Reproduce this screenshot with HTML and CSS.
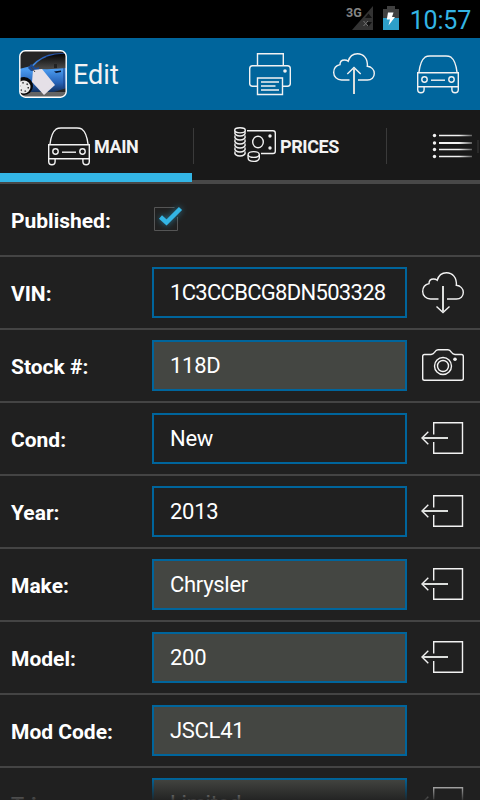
FILE: index.html
```html
<!DOCTYPE html>
<html lang="en">
  <head>
    <meta charset="UTF-8">
    <meta name="viewport" content="width=480">
    <title>Edit</title>
    <link rel="stylesheet" href="styles.css">
  </head>
  <body>
    <!-- Shared icons -->
    <svg class="defs" width="0" height="0">
      <symbol id="car" viewBox="0 0 44 40">
        <path d="M3 18C4 10 6.500 5 9 3.200Q11 2 14 2H30Q33 2 35 3.200C37.500 5 40 10 41 18" />
        <path d="M1.700 18.700H42.300V32.700H1.700Z" />
        <path d="M1.700 32V35.500a3.200 3.200 0 0 0 6.400 0V33M35.900 33V35.500a3.200 3.200 0 0 0 6.400 0V32" />
        <circle cx="8.500" cy="25.500" r="2.700" />
        <circle cx="35.500" cy="25.500" r="2.700" />
        <path d="M15 26.200H29" />
      </symbol>
      <symbol id="cloud" viewBox="0 0 44 44">
        <path d="M17.500 28H9.500C5 28 1.700 24.700 1.700 20.500C1.700 16 4.500 13.300 8 12.600C8 9.500 10 8 12.500 8C14 8 15.300 8.500 16.200 9.300C17.500 4.500 21 1.700 25.500 1.700C31.500 1.700 36 6.500 35.300 14.300C39.500 14.800 42.300 17.700 42.300 21.500C42.300 25.200 39.500 28 35.500 28H26" />
      </symbol>
      <symbol id="exit" viewBox="0 0 44 44">
        <path d="M12.700 17.500V5.700H41.500V36.300H12.700V25" />
        <path d="M7.300 14.800L1 21L7.300 27.200" />
        <path class="thick" d="M1.500 21H27" />
      </symbol>
    </svg>

    <div class="status-bar">
      <svg class="signal" width="30" height="26" viewBox="0 0 30 26">
        <path d="M27 0V24H6Z" fill="#333" />
        <path d="M19 12L22.500 7.500L26 12ZM19 16L22.500 20.500L26 16Z" fill="#111" />
        <path d="M17.500 15L22 20M22 15L17.500 20" stroke="#777" />
        <text x="0" y="11">3G</text>
      </svg>
      <svg class="battery" width="16" height="25" viewBox="0 0 16 25">
        <path d="M0 3H4V0H12V3H16V12H0Z" fill="#404040" />
        <path d="M0 12H16V24H0Z" fill="#2d9fc9" />
        <path d="M5 6.500H10.500L9 11H12L5.500 19.500L7 13.500H3.800Z" fill="#fff" />
      </svg>
      <span class="clock">10:57</span>
    </div>

    <header class="action-bar">
      <svg class="logo" width="48" height="48" viewBox="0 0 48 48">
        <defs>
          <linearGradient id="paint" gradientUnits="userSpaceOnUse" x1="0" y1="4" x2="0" y2="42">
            <stop offset="0" stop-color="#2455b0" />
            <stop offset=".4" stop-color="#4b9cf0" />
            <stop offset=".75" stop-color="#2763b8" />
            <stop offset="1" stop-color="#12305e" />
          </linearGradient>
          <linearGradient id="glass" gradientUnits="userSpaceOnUse" x1="0" y1="4" x2="0" y2="18">
            <stop offset="0" stop-color="#050505" />
            <stop offset="1" stop-color="#484848" />
          </linearGradient>
          <clipPath id="frame"><rect x="1" y="1" width="46" height="46" rx="5" /></clipPath>
        </defs>
        <g clip-path="url(#frame)">
          <rect width="48" height="48" fill="#252525" />
          <path d="M0 42H48V48H0Z" fill="#646464" />
          <path d="M0 19L12 16Q22 5 36 3.500L48 3V38L35 42H10L0 30Z" fill="url(#paint)" />
          <path d="M13.500 17Q22 7 36 4.500L48 3.500V18Q30 20 13.500 18.500Z" fill="url(#glass)" />
          <path d="M35 18V14H38V18Z" fill="#222" />
          <path d="M9 18L12 14L17 18L20 17V21H12Z" fill="#1b4a93" />
          <path d="M35 21.500L42 20.500V22L37 23Z" fill="#07152e" />
          <path d="M45 18V38" stroke="#173f85" />
          <circle cx="5" cy="36" r="9" fill="#080808" />
          <circle cx="5" cy="37" r="6.500" fill="#e8e8e8" />
          <circle cx="5" cy="37" r="4.300" fill="none" stroke="#333" stroke-width="1.500" stroke-dasharray="1.500 3" />
          <path d="M14 20L23 19L36 35L25 45L13 32Z" fill="#e5e0e7" />
          <path d="M12 17L16 22" stroke="#444" />
        </g>
        <rect x=".8" y=".8" width="46.400" height="46.400" rx="5.500" fill="none" stroke="#fff" stroke-width="1.400" />
      </svg>
      <h1>Edit</h1>
      <div class="actions">
        <svg class="icon" width="44" height="44" viewBox="0 0 44 44">
          <path d="M9.500 13.500V1.700H35.300V13.500" />
          <path d="M9 34.200H4.500Q1.700 34.200 1.700 31.500V16.700Q1.700 13.800 4.500 13.800H39.500Q42.300 13.800 42.300 16.700V31.500Q42.300 34.200 39.500 34.200H35" />
          <path d="M9.500 26H34.500V42.500H9.500Z" />
          <path d="M13 30H31M13 34H27.500M13 38H31" />
          <circle class="dot" cx="37" cy="19" r="1.800" />
        </svg>
        <svg class="icon" width="44" height="44" viewBox="0 0 44 44">
          <use href="#cloud" />
          <path d="M15.300 22L22 15.500L28.700 22" />
          <path class="thick" d="M22 16V42" />
        </svg>
        <svg class="icon" width="44" height="40"><use href="#car" /></svg>
      </div>
    </header>

    <nav class="tabs">
      <div class="tab active">
        <svg class="icon" width="44" height="40"><use href="#car" /></svg>
        <span>MAIN</span>
      </div>
      <div class="tab">
        <svg class="icon" width="45" height="40" viewBox="0 0 45 40">
          <path d="M15 4.700H41Q43.300 4.700 43.300 7V25.200Q43.300 27.500 41 27.500H29" />
          <ellipse cx="8" cy="4.300" rx="5.300" ry="2.600" />
          <path d="M3 5.500C1 11.500 15 11.500 13 5.500M3 9.500C1 15.500 15 15.500 13 9.500M3 13.500C1 19.500 15 19.500 13 13.500M3 17.500C1 23.500 15 23.500 13 17.500M3 21.500C1 27.500 15 27.500 13 21.500M3 25.500C1 31.500 15 31.500 13 25.500" />
          <ellipse cx="26" cy="16" rx="5.300" ry="5.800" />
          <circle class="dot" cx="38" cy="10" r="1.700" />
          <circle class="dot" cx="38" cy="22" r="1.700" />
          <ellipse cx="21.700" cy="28.500" rx="5.600" ry="2.900" />
          <path d="M16.100 29V32C16.100 36.500 27.300 36.500 27.300 32V29" />
        </svg>
        <span>PRICES</span>
      </div>
      <div class="tab more">
        <svg class="icon" width="48" height="40" viewBox="0 0 48 40">
          <defs>
            <linearGradient id="fade" gradientUnits="userSpaceOnUse" x1="6" y1="0" x2="41" y2="0">
              <stop offset=".6" stop-color="#f2f2f2" />
              <stop offset="1" stop-color="#555" />
            </linearGradient>
          </defs>
          <path stroke="url(#fade)" d="M7 9.500H40M7 23.500H40M7 30.500H40" />
          <path stroke="url(#fade)" stroke-width="2" d="M7 17H40" />
          <circle class="dot" cx="2.500" cy="9.500" r="1.700" />
          <circle class="dot" cx="2.500" cy="17" r="1.700" />
          <circle class="dot" cx="2.500" cy="23.500" r="1.700" />
          <circle class="dot" cx="2.500" cy="30.500" r="1.700" />
          <path d="M46 14V27" stroke="#333" />
        </svg>
      </div>
    </nav>

    <main class="form">
      <div class="row">
        <label>Published:</label>
        <svg class="checkbox" width="38" height="38" viewBox="0 0 38 38">
          <path d="M22.500 6.500H2.500V29.500H25.500V16" fill="none" stroke="#555" />
          <path class="glow" d="M8.500 16L14.500 21.500L28.500 7.500" />
          <path class="check" d="M8.500 16L14.500 21.500L28.500 7.500" />
        </svg>
      </div>
      <div class="row">
        <label>VIN:</label>
        <div class="field vin">1C3CCBCG8DN503328</div>
        <svg class="icon" width="44" height="44" viewBox="0 0 44 44">
          <use href="#cloud" />
          <path d="M15.500 35.500L22 41.500L28.500 35.500" />
          <path class="thick" d="M22 15V41" />
        </svg>
      </div>
      <div class="row">
        <label>Stock #:</label>
        <div class="field filled">118D</div>
        <svg class="icon" width="44" height="44" viewBox="0 1 44 44">
          <path d="M3.500 11.500H10Q12 11.300 13.500 9.300Q15.200 6.800 17 6.800H27Q28.800 6.800 30.500 9.300Q32 11.300 34 11.500H40.500Q42.300 11.500 42.300 13.300V35.500Q42.300 37.300 40.500 37.300H3.500Q1.700 37.300 1.700 35.500V13.300Q1.700 11.500 3.500 11.500Z" />
          <circle cx="22" cy="23" r="8.500" />
          <circle cx="22" cy="23" r="5.500" />
          <circle class="dot" cx="34" cy="16.200" r="1.800" />
        </svg>
      </div>
      <div class="row">
        <label>Cond:</label>
        <div class="field">New</div>
        <svg class="icon" width="44" height="44"><use href="#exit" /></svg>
      </div>
      <div class="row">
        <label>Year:</label>
        <div class="field">2013</div>
        <svg class="icon" width="44" height="44"><use href="#exit" /></svg>
      </div>
      <div class="row">
        <label>Make:</label>
        <div class="field filled">Chrysler</div>
        <svg class="icon" width="44" height="44"><use href="#exit" /></svg>
      </div>
      <div class="row">
        <label>Model:</label>
        <div class="field filled">200</div>
        <svg class="icon" width="44" height="44"><use href="#exit" /></svg>
      </div>
      <div class="row">
        <label>Mod Code:</label>
        <div class="field filled">JSCL41</div>
      </div>
      <div class="row">
        <label>Trim:</label>
        <div class="field filled">Limited</div>
        <svg class="icon" width="44" height="44"><use href="#exit" /></svg>
      </div>
    </main>
  </body>
</html>
```

FILE: styles.css
```css
* {
  box-sizing: border-box;
}
body {
  display: flex;
  flex-direction: column;
  width: 480px;
  height: 800px;
  margin: 0;
  overflow: hidden;
  background-color: #202020;
  color: #fff;
  font-family: Roboto, sans-serif;
}
.defs {
  position: absolute;
}
.icon {
  flex: none;
  fill: none;
  stroke: #f2f2f2;
  stroke-width: 1.4px;
}
.icon .dot,
.dot {
  fill: #f2f2f2;
  stroke: none;
}
.thick {
  stroke: #dcdedc;
  stroke-width: 2px;
}

/* Status bar */
.status-bar {
  display: flex;
  flex: none;
  justify-content: flex-end;
  height: 38px;
  padding: 6px 9px 0 0;
  background-color: #000;
}
.signal {
  margin-right: 7px;
  overflow: visible;
}
.signal text {
  fill: #858585;
  font-size: 12.5px;
  font-weight: bold;
}
.clock {
  width: 63px;
  margin-left: 9px;
  color: #33b5e5;
  font-size: 25px;
  line-height: 30px;
  letter-spacing: -0.2px;
  text-align: right;
}

/* Action bar */
.action-bar {
  display: flex;
  flex: none;
  align-items: center;
  height: 72px;
  padding: 0 20px 0 19px;
  background-color: #00659c;
}
h1 {
  margin: 0 0 0 6px;
  padding-top: 2px;
  color: #f3f3f3;
  font-size: 27px;
  font-weight: normal;
}
.actions {
  display: flex;
  align-items: center;
  gap: 40px;
  margin-left: auto;
}

/* Tabs */
.tabs {
  display: flex;
  flex: none;
  height: 74px;
  background-color: #191919;
  border-bottom: 4px solid #484848;
}
.tab {
  display: flex;
  flex: none;
  align-items: center;
  width: 193px;
  padding: 2px 0 0 47px;
  font-size: 18px;
  font-weight: bold;
  letter-spacing: -0.4px;
  color: #f3f3f3;
}
.tab span {
  margin-left: 3px;
}
.tab + .tab {
  padding-left: 39px;
  background: linear-gradient(#3a3a3a, #3a3a3a) 0 18px / 1px 36px no-repeat;
}
.tab.more {
  width: 94px;
  padding-left: 46px;
}
.tab.active {
  position: relative;
}
.tab.active::after {
  content: "";
  position: absolute;
  left: 0;
  bottom: -2px;
  width: 192px;
  height: 9px;
  background-color: #33b5e5;
}

/* Form */
.form {
  position: relative;
  flex: 1;
  overflow: hidden;
}
.form::after {
  content: "";
  position: absolute;
  left: 0;
  right: 0;
  bottom: 0;
  height: 22px;
  background: linear-gradient(rgba(32, 32, 32, 0), rgba(32, 32, 32, 0.9));
}
.row {
  display: flex;
  align-items: center;
  height: 73px;
  padding-left: 11px;
  border-bottom: 2px solid #444;
}
label {
  width: 141px;
  font-size: 21px;
  font-weight: bold;
  padding-top: 2px;
}
.field {
  width: 255px;
  height: 51px;
  padding-left: 16px;
  border: 2px solid #00659c;
  font-size: 22px;
  line-height: 47px;
  letter-spacing: -0.3px;
}
.field.vin {
  letter-spacing: -0.7px;
}
.field.filled {
  background-color: #444642;
}
.row .icon {
  margin-left: 14px;
}
.row .checkbox {
  margin-left: 0;
}
.check,
.glow {
  fill: none;
  stroke: #33b5e5;
  stroke-width: 4.5px;
}
.glow {
  opacity: 0.6;
  filter: blur(3px);
}
```
